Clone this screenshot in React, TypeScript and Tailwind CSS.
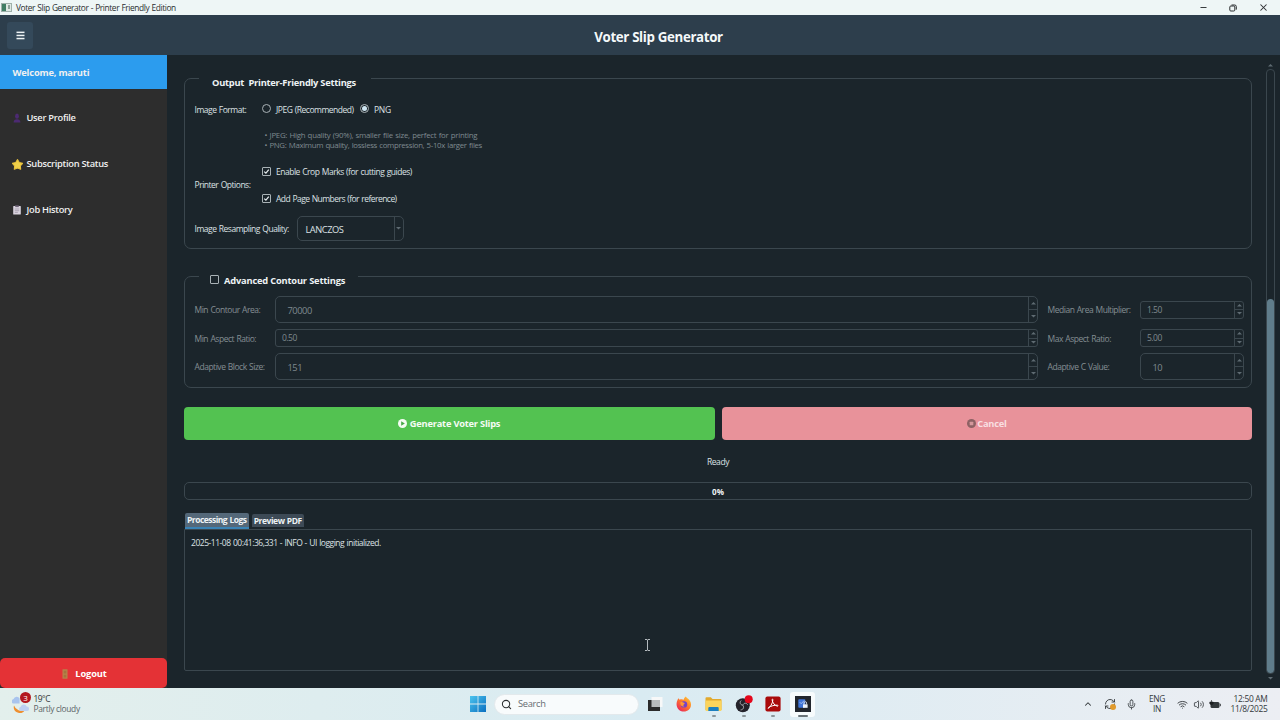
import React from "react";
import clsx from "clsx";
import {
  ChevronUp,
  Mic,
  Minus,
  RefreshCw,
  Search,
  Volume2,
  Wifi,
  X,
} from "lucide-react";

const TitleBar = () => (
  <div className="flex h-[15px] shrink-0 items-center bg-[#eef6f6] text-[#2b2f31]">
    <svg viewBox="0 0 11 9" className="ml-px h-[9px] w-[11px]">
      <rect x="0.5" y="0.5" width="10" height="8" fill="#dfe9e4" stroke="#9fb0aa" />
      <rect x="1" y="1" width="4" height="7" fill="#3f7d64" />
      <rect x="7" y="2" width="2" height="4" fill="#8fa39b" />
    </svg>
    <span className="ml-1 pt-[2px] text-[8.4px] tracking-[-0.41px] [word-spacing:0.5px]">
      Voter Slip Generator - Printer Friendly Edition
    </span>
    <div className="ml-auto flex items-center">
      <Minus className="mr-[21px] h-[9px] w-[9px]" strokeWidth={2.5} />
      <svg
        viewBox="0 0 8 8"
        className="mr-[21px] h-2 w-2"
        fill="none"
        stroke="#2b2f31"
        strokeWidth="1"
      >
        <rect x="0.8" y="2" width="5" height="5" rx="1" />
        <path d="M2.5 1h3.2a1.6 1.6 0 0 1 1.6 1.6v3" />
      </svg>
      <X className="mr-[11px] h-[11px] w-[11px]" strokeWidth={2.2} />
    </div>
  </div>
);

const Header = () => (
  <header className="flex h-10 shrink-0 items-center bg-[#2d3e4c]">
    <button className="ml-[7px] flex h-[27px] w-[26px] items-center justify-center rounded-[3px] bg-[#34495a]">
      <svg viewBox="0 0 9 9" className="h-[9px] w-[9px]" fill="#eef3f5">
        <rect x="0.5" y="0.6" width="8" height="1.5" />
        <rect x="0.5" y="3.7" width="8" height="1.5" />
        <rect x="0.5" y="6.8" width="8" height="1.5" />
      </svg>
    </button>
    <h1 className="flex-1 pt-[5px] pl-[4px] text-center text-[13.3px] font-bold tracking-[-0.35px] text-[#f4f8fa]">
      Voter Slip Generator
    </h1>
  </header>
);

const UserIcon = () => (
  <svg viewBox="0 0 10 10" className="h-[10px] w-[10px]" fill="#4c2a72">
    <ellipse cx="5" cy="3.2" rx="1.9" ry="2.6" />
    <path d="M1.6 9.4c0-2.4 1.2-3.2 3.4-3.2s3.4.8 3.4 3.2z" />
  </svg>
);

const StarIcon = () => (
  <svg viewBox="0 0 10 10" className="h-[11px] w-[11px]">
    <path
      d="M5 .6 6.6 3.2l3 .7-2 2.3.3 3.1L5 8.1 2.1 9.3l.3-3.1-2-2.3 3-.7z"
      fill="#efd04a"
      stroke="#e6c03c"
      strokeWidth="1"
      strokeLinejoin="round"
    />
  </svg>
);

const ClipboardIcon = () => (
  <svg viewBox="0 0 10 10" className="h-[10px] w-[10px]">
    <rect x="1.2" y="1" width="7.6" height="8.6" rx=".6" fill="#d9d3de" />
    <rect x="3.2" y=".3" width="3.6" height="1.8" fill="#6f6478" />
    <path d="M2.8 4h4.4M2.8 5.7h4.4M2.8 7.4h3" stroke="#8d8496" strokeWidth=".6" />
  </svg>
);

const DoorIcon = () => (
  <svg viewBox="0 0 6 10" className="h-[10px] w-[6px]">
    <rect x=".5" y=".3" width="5" height="9.4" fill="#b8834a" />
    <path d="M1.7 1.8h2.6v2.6H1.7zM1.7 5.8h2.6v2.6H1.7z" fill="#a5743f" />
  </svg>
);

const menu = [
  { label: "User Profile", icon: <UserIcon /> },
  { label: "Subscription Status", icon: <StarIcon /> },
  { label: "Job History", icon: <ClipboardIcon /> },
];

const Sidebar = () => (
  <aside className="flex w-[167px] shrink-0 flex-col bg-[#2d2d2d] text-[9.3px] text-[#f0f0f0]">
    <div className="flex h-[34px] items-center bg-[#2c9cee] pl-[12.5px] font-bold tracking-[-0.18px]">
      <span className="pt-px">Welcome, maruti</span>
    </div>
    <nav className="flex flex-col pt-1.5">
      {menu.map((item) => (
        <a
          key={item.label}
          className="flex h-[46px] items-center pl-3 font-semibold"
        >
          <span className="flex w-[14.5px]">{item.icon}</span>
          <span className="pb-px tracking-[-0.28px]">{item.label}</span>
        </a>
      ))}
    </nav>
    <button className="mt-auto flex h-[30px] items-center justify-center gap-[7px] rounded-[5px] bg-[#e43236] pt-px pl-[2px] font-bold tracking-[-0.15px] text-white">
      <DoorIcon />
      Logout
    </button>
  </aside>
);

const Radio = ({ checked = false }: { checked?: boolean }) => (
  <span className="mb-[3px] flex h-[9px] w-[9px] shrink-0 items-center justify-center rounded-full border border-[#a9b2b6]">
    {checked && <span className="h-[5px] w-[5px] rounded-full bg-[#cfe6f2]" />}
  </span>
);

const Checkbox = ({ checked = false }: { checked?: boolean }) => (
  <span className="mb-px flex h-[9px] w-[9px] shrink-0 items-center justify-center rounded-[1px] border border-[#a9b2b6]">
    {checked && (
      <svg viewBox="0 0 7 7" className="h-[7px] w-[7px]" fill="none">
        <path d="M1.2 3.6 2.9 5.2 5.8 1.6" stroke="#e8eef0" strokeWidth="1.2" />
      </svg>
    )}
  </span>
);

const Arrow = ({ up = false }: { up?: boolean }) => (
  <svg viewBox="0 0 5 3" className="h-[3px] w-[5px]" fill="#5f6b72">
    {up ? <path d="M2.5 0 5 2.6H0z" /> : <path d="M0 0h5L2.5 2.6z" />}
  </svg>
);

type SpinBoxProps = { value: string; large?: boolean };

const SpinBox = ({ value, large = false }: SpinBoxProps) => (
  <div
    className={clsx(
      "flex self-center overflow-hidden border border-[#3b474e] text-[#7f898e]",
      large ? "h-[27px] rounded-[5px]" : "h-[18px] rounded-[3px]"
    )}
  >
    <span
      className={clsx(
        "flex flex-1 items-center",
        large
          ? "pt-[2px] pl-[11.5px] text-[9.3px] tracking-[-0.45px]"
          : "pt-px pl-[6px] text-[8.5px] tracking-[-0.5px]"
      )}
    >
      {value}
    </span>
    <div className="flex w-[9px] flex-col border-l border-[#3b474e]">
      <span className="flex flex-1 items-center justify-center border-b border-[#3b474e]">
        <Arrow up />
      </span>
      <span className="flex flex-1 items-center justify-center">
        <Arrow />
      </span>
    </div>
  </div>
);

const OutputSettings = () => (
  <fieldset className="h-[179px] rounded-[7px] border border-[#3b474e] pl-[9.5px] text-[8.5px] tracking-[-0.48px] text-[#dbe1e4] [word-spacing:0.6px]">
    <legend className="ml-1 h-4 w-[172px] pl-[13.5px] text-[9.3px] leading-[25px] font-bold tracking-[-0.24px] whitespace-pre text-[#eef3f5] [word-spacing:0px]">
      {"Output  Printer-Friendly Settings"}
    </legend>
    <div className="flex h-[44px] items-start pt-4 leading-4">
      <span className="w-[67px]">Image Format:</span>
      <div className="flex w-[98px] items-center gap-[5.5px]">
        <Radio />
        <span>JPEG (Recommended)</span>
      </div>
      <div className="flex items-center gap-[5.5px]">
        <Radio checked />
        <span className="tracking-[-0.3px]">PNG</span>
      </div>
    </div>
    <div className="ml-[70px] text-[7.8px] leading-[10px] text-[#7f8a90]">
      <p className="tracking-[-0.25px]">
        • JPEG: High quality (90%), smaller file size, perfect for printing
      </p>
      <p className="tracking-[-0.32px]">
        • PNG: Maximum quality, lossless compression, 5-10x larger files
      </p>
    </div>
    <div className="mt-3 flex items-center">
      <span className="w-[67px] pt-px">Printer Options:</span>
      <div className="flex flex-col gap-2">
        <div className="flex h-[19px] items-center gap-[5.5px]">
          <Checkbox checked />
          <span className="pt-[2px]">Enable Crop Marks (for cutting guides)</span>
        </div>
        <div className="flex h-[19px] items-center gap-[5.5px]">
          <Checkbox checked />
          <span className="pt-[2px] tracking-[-0.54px]">
            Add Page Numbers (for reference)
          </span>
        </div>
      </div>
    </div>
    <div className="mt-2 flex items-center">
      <span className="w-[102px] pt-[2px]">Image Resampling Quality:</span>
      <div className="flex h-[25px] w-[107px] rounded-[5px] border border-[#3b474e]">
        <span className="flex flex-1 items-center pt-[3px] pl-2 text-[9.3px]">LANCZOS</span>
        <span className="flex w-[9px] items-center justify-center border-l border-[#3b474e]">
          <Arrow />
        </span>
      </div>
    </div>
  </fieldset>
);

const ContourSettings = () => (
  <fieldset className="mt-[19px] h-[120px] rounded-[7px] border border-[#3b474e] pl-[9.5px] text-[8.5px] tracking-[-0.47px] text-[#848e93] [word-spacing:0.6px]">
    <legend className="ml-1 h-4 w-[159px] pl-[11px] text-[9.3px] font-bold tracking-[-0.18px] text-[#eef3f5] [word-spacing:0px]">
      <span className="flex h-[24px] items-center gap-[5.5px]">
        <Checkbox />
        <span className="pt-[2px]">Advanced Contour Settings</span>
      </span>
    </legend>
    <div className="mt-3 grid grid-cols-[80.5px_763px_9.5px_92.5px_104px] items-center gap-y-1.5">
      <span className="pt-[2px]">Min Contour Area:</span>
      <SpinBox value="70000" large />
      <i />
      <span className="pt-[2px]">Median Area Multiplier:</span>
      <SpinBox value="1.50" />

      <span className="pt-[2px]">Min Aspect Ratio:</span>
      <SpinBox value="0.50" />
      <i />
      <span className="pt-[2px]">Max Aspect Ratio:</span>
      <SpinBox value="5.00" />

      <span className="pt-[2px]">Adaptive Block Size:</span>
      <SpinBox value="151" large />
      <i />
      <span className="pt-[2px]">Adaptive C Value:</span>
      <SpinBox value="10" large />
    </div>
  </fieldset>
);

const Actions = () => (
  <div className="mt-[18.5px] flex gap-[7px] text-[9.3px] font-bold tracking-[-0.22px]">
    <button className="flex h-[33px] flex-1 items-center justify-center gap-[2.5px] rounded-[4px] bg-[#53c251] text-[#f4fbf4]">
      <svg viewBox="0 0 9 9" className="h-[9px] w-[9px]">
        <circle cx="4.5" cy="4.5" r="4.5" fill="#f4fbf4" />
        <path d="M3.2 2.2 6.8 4.5 3.2 6.8z" fill="#47a846" />
      </svg>
      <span className="pt-[2px]">Generate Voter Slips</span>
    </button>
    <button className="flex h-[33px] flex-1 items-center justify-center gap-[1.5px] rounded-[4px] bg-[#e8929a] text-[#f9dfe1]">
      <svg viewBox="0 0 9 9" className="h-[9px] w-[9px]">
        <circle cx="4.5" cy="4.5" r="4.5" fill="#8d6164" />
        <rect x="2.7" y="2.7" width="3.6" height="3.6" rx=".6" fill="#d4989c" />
      </svg>
      <span className="pt-[2px]">Cancel</span>
    </button>
  </div>
);

const Logs = () => (
  <section className="mt-[12.5px] text-[8.5px]">
    <div className="flex h-4 items-end gap-[3px] pl-px font-bold tracking-[-0.45px] text-[#eef3f5] [word-spacing:0.6px]">
      <span className="flex h-[16px] w-[63.5px] items-center justify-center rounded-t-[2px] border-b-2 border-[#3a83b5] bg-[#546879] pt-[2px] tracking-[-0.52px]">
        Processing Logs
      </span>
      <span className="mb-0.5 flex h-[13px] w-[52.5px] items-center justify-center rounded-t-[2px] bg-[#3d4a56] pt-[2px]">
        Preview PDF
      </span>
    </div>
    <div className="h-[142px] rounded-b-[2px] border border-[#3b474e] px-1.5 pt-[7px] text-[#dbe1e4]">
      <p className="leading-3 tracking-[-0.48px] [word-spacing:0.6px]">
        2025-11-08 00:41:36,331 - INFO - UI logging initialized.
      </p>
    </div>
  </section>
);

const ScrollBar = () => (
  <div className="flex w-[9px] flex-col items-center pt-[9px] pb-[8px]">
    <Arrow up />
    <div className="mt-[2px] mb-[3px] flex w-[9px] flex-1 flex-col justify-end rounded-[4px] border border-[#3b474e]">
      <div className="h-[374px] rounded-[4px] bg-[#607d8b]" />
    </div>
    <Arrow />
  </div>
);

const Main = () => (
  <main className="flex flex-1 bg-[#1b252b]">
    <div className="ml-[17px] w-[1068px] pt-[15px]">
      <OutputSettings />
      <ContourSettings />
      <Actions />
      <p className="mt-[15.5px] text-center text-[8.5px] leading-[14px] tracking-[-0.4px] text-[#dbe1e4]">
        Ready
      </p>
      <div className="mt-[13px] flex h-[18px] items-center justify-center rounded-[5px] border border-[#3b474e] pt-px text-[8px] font-bold text-[#eef3f5]">
        0%
      </div>
      <Logs />
    </div>
    <div className="ml-[14px] flex">
      <ScrollBar />
    </div>
  </main>
);

const WindowsLogo = () => (
  <svg viewBox="0 0 16 16" className="h-4 w-4">
    <defs>
      <linearGradient id="win" x1="0" y1="0" x2="1" y2="1">
        <stop offset="0" stopColor="#4cc4ee" />
        <stop offset="1" stopColor="#0a6fc0" />
      </linearGradient>
    </defs>
    <path d="M0 0h7.6v7.6H0zM8.4 0H16v7.6H8.4zM0 8.4h7.6V16H0zM8.4 8.4H16V16H8.4z" fill="url(#win)" />
  </svg>
);

const TaskView = () => (
  <svg viewBox="0 0 16 16" className="h-4 w-4">
    <rect x="4.5" y="1" width="11" height="10" fill="#f7f8f8" />
    <rect x="1" y="4" width="12" height="11" fill="#2b2b2b" />
    <rect x="4.5" y="4" width="8.5" height="7" fill="#b9bcbd" />
  </svg>
);

const Firefox = () => (
  <svg viewBox="0 0 16 16" className="h-4 w-4">
    <defs>
      <linearGradient id="fox" x1="1" y1="0" x2="0.2" y2="1">
        <stop offset="0" stopColor="#ffd83a" />
        <stop offset="0.5" stopColor="#ff7a2a" />
        <stop offset="1" stopColor="#e8245c" />
      </linearGradient>
    </defs>
    <path
      d="M9.8.4c.8 1.6 2.4 2 3.6 3.6 2.6 3.6 1.8 7.6-.6 9.8-2.6 2.4-7 2.4-9.7.1C.4 11.6-.2 7.5 1.5 3.9l.8-1.7 1.4 1.5c1.5-.6 3.1-.3 4 .1C7.9 2.4 8.6 1.2 9.8.4z"
      fill="url(#fox)"
    />
    <circle cx="8" cy="8.4" r="3.2" fill="#7542c9" />
    <path d="M4.3 6.5c1.4-.8 2.6-.3 3.5.3 1 .2 1.2.9.3 1.4-1.2.5-1 1.7.3 2.1-1.7.8-4.6-.6-4.1-3.8z" fill="#ff9a32" />
  </svg>
);

const Explorer = () => (
  <svg viewBox="0 0 17 16" className="h-4 w-[17px]">
    <path d="M.5 2.2a1 1 0 0 1 1-1h4.3l1.7 1.9h8a1 1 0 0 1 1 1V14H.5z" fill="#e2a92d" />
    <path d="M.5 4.6h16V14a1 1 0 0 1-1 1h-14a1 1 0 0 1-1-1z" fill="#fbd45c" />
    <path d="M3.3 15v-3a1 1 0 0 1 1-1h8.4a1 1 0 0 1 1 1v3z" fill="#1b7fc0" />
  </svg>
);

const Obs = () => (
  <svg viewBox="0 0 18 18" className="h-[18px] w-[18px]">
    <circle cx="7.8" cy="10.2" r="7" fill="#23222a" />
    <g fill="none" stroke="#a9a9b0" strokeWidth="1">
      <path d="M7.8 10.2C4.8 9.8 4.5 7 6.2 5.5" />
      <path d="M7.8 10.2c1.1-2.8 4-2.4 4.8-.4" />
      <path d="M7.8 10.2c1.8 2.3.2 4.6-2.2 4.7" />
    </g>
    <circle cx="13.7" cy="4.3" r="4" fill="#e4061b" />
  </svg>
);

const Acrobat = () => (
  <svg viewBox="0 0 16 16" className="h-4 w-4">
    <rect x=".4" y=".4" width="15.2" height="15.2" rx="2" fill="#a90a0a" />
    <path
      d="M3.3 12.2c1.9-1 4.3-4.6 4.6-8.4.1-.9-.9-.9-.8 0 .3 3 2.7 5.8 5.3 6.4.9.1.9-.9 0-1-2.7-.3-6.5.8-8.7 2.3-.9.6-.9 1.1-.4.7z"
      fill="none"
      stroke="#fff"
      strokeWidth="1"
    />
  </svg>
);

const VoterApp = () => (
  <svg viewBox="0 0 16 16" className="h-4 w-4">
    <rect width="16" height="16" fill="#22262d" />
    <rect x="3.3" y="3.3" width="7" height="8.5" rx=".8" fill="#3f74d8" />
    <path d="m4.8 6.2 1.4 1.5 3-3.2" fill="none" stroke="#b9cdf5" strokeWidth=".8" />
    <rect x="8" y="8.300" width="4.600" height="3.500" fill="#f1f4fa" />
    <path d="M9 8.300V7a1.300 1.300 0 0 1 2.600 0v1.300" fill="none" stroke="#f1f4fa" strokeWidth=".8" />
  </svg>
);

const apps = [
  { id: "taskview", icon: <TaskView /> },
  { id: "firefox", icon: <Firefox /> },
  { id: "explorer", icon: <Explorer />, running: true },
  { id: "obs", icon: <Obs />, running: true },
  { id: "acrobat", icon: <Acrobat />, running: true },
  { id: "voter", icon: <VoterApp />, running: true, active: true },
];

const Weather = () => (
  <div className="flex w-[467px] items-center pl-3">
    <div className="relative mb-0.5 h-[20px] w-[19px]">
      <svg viewBox="0 0 19 20" className="h-[20px] w-[19px]">
        <path d="M2 12.5a6 6 0 0 0 11 4.5 8 8 0 0 1-11-4.5z" fill="#ee8f2f" />
        <path d="M1 10.5a2.4 2.4 0 0 1 .6-4.5 3.2 3.2 0 0 1 6-.4V10.5z" fill="#a9c4ee" />
        <path d="M8.5 18a2.2 2.2 0 0 1 .2-4.2 3.2 3.2 0 0 1 6-.2A2.2 2.2 0 0 1 15 18z" fill="#bcd0f2" />
      </svg>
      <span className="absolute -top-[1px] left-[8px] flex h-[11px] w-[11px] items-center justify-center rounded-full bg-[#b3191f] text-[8px] text-white">
        3
      </span>
    </div>
    <div className="ml-[2.5px] text-[8.4px] leading-[10.5px]">
      <p className="tracking-[-0.5px] text-[#2d3335]">19°C</p>
      <p className="tracking-[-0.3px] text-[#5c6467]">Partly cloudy</p>
    </div>
  </div>
);

const Tray = () => (
  <div className="ml-auto flex items-center text-[#33383b]">
    <ChevronUp className="h-[10px] w-[10px]" strokeWidth={2.5} />
    <span className="relative ml-[11px] flex">
      <RefreshCw className="h-[12px] w-[12px]" strokeWidth={1.8} />
      <span className="absolute right-0 bottom-0 h-[6px] w-[6px] rounded-full bg-[#e09a2c]" />
    </span>
    <Mic className="ml-[10px] h-[11px] w-[11px]" strokeWidth={1.8} />
    <p className="ml-[11.5px] w-[17px] text-center text-[8.4px] leading-[10.5px] tracking-[-0.35px]">
      ENG
      <br />
      IN
    </p>
    <Wifi className="ml-[11px] h-[11px] w-[11px]" strokeWidth={2} />
    <Volume2 className="ml-[5px] h-[11px] w-[12px]" strokeWidth={1.8} />
    <svg viewBox="0 0 12 9" className="ml-[4px] h-[9px] w-[12px]">
      <rect x="1.5" y="2" width="9" height="6" rx="1.5" fill="#33383b" />
      <rect x="10.8" y="3.8" width="1" height="2.4" fill="#33383b" />
      <path d="M2.5 0v2M.8 2h3.4v1.8L2.5 5 .8 3.8z" fill="#1d2022" stroke="#1d2022" strokeWidth=".6" />
    </svg>
    <p className="mr-[12.5px] ml-[9px] w-[38px] text-right text-[8.4px] leading-[10.5px] tracking-[-0.3px] whitespace-nowrap">
      12:50 AM
      <br />
      11/8/2025
    </p>
  </div>
);

const TaskBar = () => (
  <footer className="flex h-8 shrink-0 items-center bg-linear-to-r from-[#e3efec] via-[#d9ebf2] to-[#eceef3]">
    <Weather />
    <div className="flex items-center pl-[3px]">
      <WindowsLogo />
      <div className="ml-2 flex h-[21px] w-[145px] items-center rounded-full border border-[#e3e9ec] bg-[#f8fbfc] pl-1.5 text-[9.3px] tracking-[-0.3px] text-[#666c70]">
        <Search className="mr-1.5 h-[11px] w-[11px] text-[#2b2f31]" strokeWidth={2.3} />
        Search
      </div>
      {apps.map((app) => (
        <div
          key={app.id}
          className={clsx(
            "relative flex h-[25px] w-[25px] items-center justify-center",
            app.id === "taskview" ? "ml-[3px]" : "ml-[4.7px]",
            app.active && "rounded-[3px] bg-[#f7fbfc]"
          )}
        >
          {app.icon}
          {app.running && (
            <span
              className={clsx(
                "absolute bottom-0 h-[2px] rounded-full",
                app.active ? "w-[10px] bg-[#6a7378]" : "w-[4px] bg-[#8d979b]"
              )}
            />
          )}
        </div>
      ))}
    </div>
    <Tray />
  </footer>
);

const TextCursor = () => (
  <svg
    viewBox="0 0 7 12"
    className="absolute top-[639px] left-[644px] h-[12px] w-[7px]"
    fill="none"
    stroke="#b4bbbf"
    strokeWidth="1"
  >
    <path d="M1 .5h2l.5.5.5-.5h2M1 11.5h2l.5-.5.5.5h2M3.5 1v10" />
  </svg>
);

const App = () => {
  return (
    <div className="relative flex h-[720px] w-[1280px] flex-col overflow-hidden font-['Open_Sans','Noto_Sans',sans-serif]">
      <TitleBar />
      <Header />
      <div className="flex flex-1">
        <Sidebar />
        <Main />
      </div>
      <TaskBar />
      <TextCursor />
    </div>
  );
};

export default App;
